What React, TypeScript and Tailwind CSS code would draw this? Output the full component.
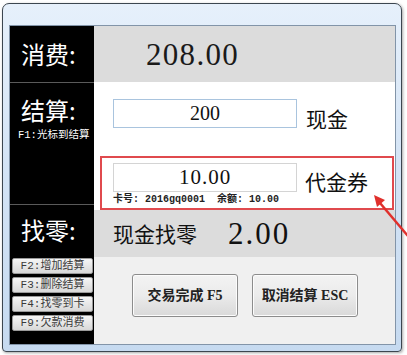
import React from "react";

const cjk = '"Noto Sans CJK SC", "Noto Sans", sans-serif';
const serif = '"Liberation Serif", "Noto Sans CJK SC", serif';
const mono = '"Liberation Mono", "Noto Sans CJK SC", monospace';

function FButton({ label }: { label: string }) {
  return (
    <div
      className="h-[16px] w-[81px] flex items-center justify-center bg-gradient-to-b from-[#f6f6f6] to-[#d8d8d8] border border-[#9a9a9a] rounded-[2px] text-[11px] text-[#3a3a3a] leading-none"
      style={{ fontFamily: mono }}
    >
      {label}
    </div>
  );
}

function BigButton({ label }: { label: string }) {
  return (
    <div
      className="h-[43px] w-[106px] flex items-center justify-center bg-gradient-to-b from-[#f3f3f3] via-[#ebebeb] to-[#d9d9d9] border border-[#8c8c8c] rounded-[3px] text-[14px] font-bold text-[#222] shadow-[inset_0_0_0_1px_#fcfcfc]"
      style={{ fontFamily: serif }}
    >
      {label}
    </div>
  );
}

export default function App() {
  return (
    <div className="relative w-[407px] h-[355px] bg-white overflow-hidden">
      <div className="ml-[2px] mt-[3px] w-[400px] h-[349px] rounded-t-[7px] rounded-b-[4px] border border-[#3c4650] bg-gradient-to-b from-[#e6f0fb] via-[#d3e3f5] to-[#c6daf0] pt-[21px] px-[6px] pb-[6px] shadow-[1px_1px_3px_rgba(0,0,0,0.35)]">
        <div className="w-[387px] h-[320px] border border-[#8294a8] flex">
          {/* left black column */}
          <div className="w-[84px] bg-black flex flex-col text-white" style={{ fontFamily: cjk }}>
            <div className="h-[56px] flex items-center pl-[11px] text-[24px] leading-none">消费:</div>
            <div className="h-[1px] bg-[#5a5a5a]" />
            <div className="h-[121px] flex flex-col pl-[11px] pt-[15px]">
              <div className="text-[24px] leading-none">结算:</div>
              <div className="text-[10.5px] leading-none mt-[8px] -ml-[3px] whitespace-nowrap" style={{ fontFamily: mono }}>
                F1:光标到结算
              </div>
            </div>
            <div className="h-[1px] bg-[#5a5a5a]" />
            <div className="h-[52px] flex items-center pl-[11px] text-[24px] leading-none pb-[2px]">找零:</div>
            <div className="flex flex-col gap-[3px] pl-[2px] pt-[1px]">
              <FButton label="F2:增加结算" />
              <FButton label="F3:删除结算" />
              <FButton label="F4:找零到卡" />
              <FButton label="F9:欠款消费" />
            </div>
          </div>

          {/* right column */}
          <div className="flex-1 flex flex-col">
            <div className="h-[56px] bg-[#dcdcdc] flex items-center pl-[52px]">
              <span className="text-[31px] leading-none text-[#1a1a1a] tracking-[1.3px]" style={{ fontFamily: serif }}>
                208.00
              </span>
            </div>
            <div className="h-[128px] bg-white flex flex-col">
              <div className="flex items-center pl-[19px] pt-[15px]">
                <div
                  className="w-[184px] h-[29px] border border-[#a9c4de] flex items-center justify-center text-[20px] text-[#111] leading-none"
                  style={{ fontFamily: serif }}
                >
                  200
                </div>
                <div className="ml-[9px] mt-[11px] text-[21px] leading-none text-[#111]" style={{ fontFamily: cjk }}>
                  现金
                </div>
              </div>
              <div className="mt-[27px] ml-[6px] w-[294px] h-[57px] border-2 border-[#e04a4e] pl-[11px] pt-[5px]">
                <div className="flex items-center">
                  <div
                    className="w-[184px] h-[29px] border border-[#d4d4d4] flex items-center justify-center text-[21px] text-[#111] leading-none tracking-[1px]"
                    style={{ fontFamily: serif }}
                  >
                    10.00
                  </div>
                  <div className="ml-[8px] mt-[7px] text-[21px] leading-none text-[#111]" style={{ fontFamily: cjk }}>
                    代金券
                  </div>
                </div>
                <div className="mt-[3px] text-[10px] font-bold leading-none text-[#222] whitespace-pre" style={{ fontFamily: mono }}>
                  卡号: 2016gq0001  余额: 10.00
                </div>
              </div>
            </div>
            <div className="h-[47px] bg-[#dcdcdc] flex items-center pl-[19px]">
              <span className="text-[21px] leading-none text-[#111]" style={{ fontFamily: cjk }}>
                现金找零
              </span>
              <span className="ml-[31px] text-[31px] leading-none text-[#111] tracking-[2px]" style={{ fontFamily: serif }}>
                2.00
              </span>
            </div>
            <div className="flex-1 bg-[#f0f0f0] flex gap-[14px] pl-[38px] pt-[17px]">
              <BigButton label="交易完成 F5" />
              <BigButton label="取消结算 ESC" />
            </div>
          </div>
        </div>
      </div>

      {/* red arrow annotation */}
      <svg className="absolute left-0 top-0" width="407" height="355" viewBox="0 0 407 355">
        <line x1="408" y1="236" x2="380" y2="203" stroke="#e0302c" strokeWidth="2.5" />
        <polygon points="374,195 385,200 377,207" fill="#e0302c" />
      </svg>
    </div>
  );
}
